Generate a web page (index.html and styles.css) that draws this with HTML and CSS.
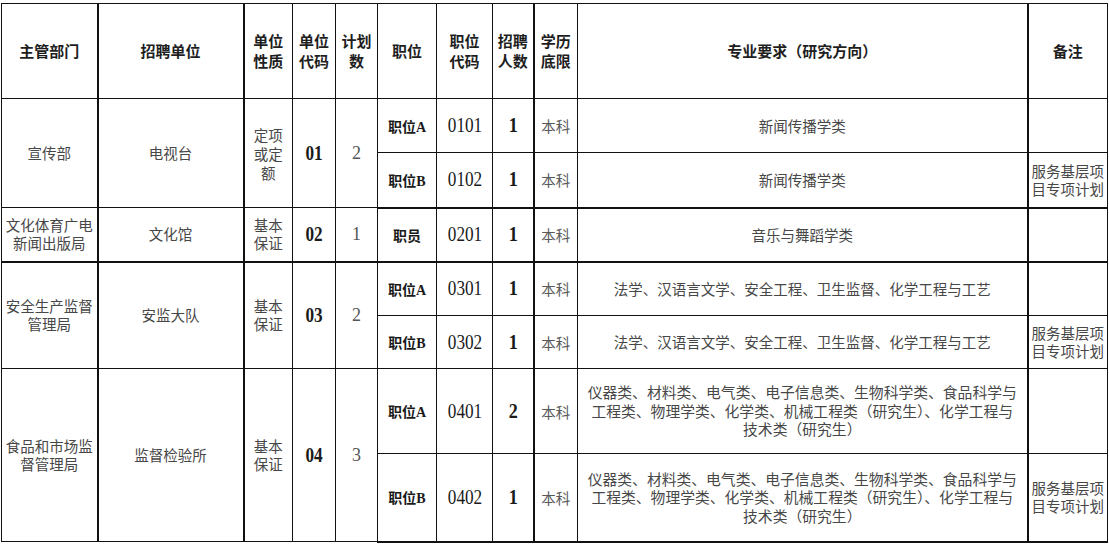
FILE: index.html
```html
<!DOCTYPE html>
<html lang="zh">
<head>
<meta charset="utf-8">
<title>招聘计划表</title>
<link rel="stylesheet" href="styles.css">
</head>
<body>
<table class="sheet">
  <colgroup>
    <col class="w-dept"><col class="w-unit"><col class="w-nature"><col class="w-ucode"><col class="w-plan">
    <col class="w-pos"><col class="w-pcode"><col class="w-num"><col class="w-edu"><col class="w-major"><col class="w-note">
  </colgroup>
  <thead>
    <tr class="r-head">
      <th class="tk-r">主管部门</th>
      <th class="tk-r">招聘单位</th>
      <th>单位<br>性质</th>
      <th>单位<br>代码</th>
      <th>计划<br>数</th>
      <th>职位</th>
      <th>职位<br>代码</th>
      <th class="tk-r">招聘<br>人数</th>
      <th>学历<br>底限</th>
      <th class="tk-r">专业要求（研究方向）</th>
      <th>备注</th>
    </tr>
  </thead>
  <tbody>
    <tr class="r-s1">
      <td rowspan="2" class="tk-r txt">宣传部</td>
      <td rowspan="2" class="tk-r txt">电视台</td>
      <td rowspan="2" class="txt nat3">定项<br>或定<br>额</td>
      <td rowspan="2" class="code"><span class="cond">01</span></td>
      <td rowspan="2" class="plan">2</td>
      <td class="pos">职位A</td>
      <td class="pcode"><span class="cond">0101</span></td>
      <td class="tk-r num"><span class="cond">1</span></td>
      <td class="edu">本科</td>
      <td class="tk-r txt">新闻传播学类</td>
      <td class="note"></td>
    </tr>
    <tr class="r-s2 tk-b">
      <td class="pos">职位B</td>
      <td class="pcode"><span class="cond">0102</span></td>
      <td class="tk-r num"><span class="cond">1</span></td>
      <td class="edu">本科</td>
      <td class="tk-r txt">新闻传播学类</td>
      <td class="note">服务基层项<br>目专项计划</td>
    </tr>
    <tr class="r-s3 tk-b">
      <td class="tk-r txt">文化体育广电<br>新闻出版局</td>
      <td class="tk-r txt">文化馆</td>
      <td class="txt">基本<br>保证</td>
      <td class="code"><span class="cond">02</span></td>
      <td class="plan">1</td>
      <td class="pos">职员</td>
      <td class="pcode"><span class="cond">0201</span></td>
      <td class="tk-r num"><span class="cond">1</span></td>
      <td class="edu">本科</td>
      <td class="tk-r txt">音乐与舞蹈学类</td>
      <td class="note"></td>
    </tr>
    <tr class="r-s4">
      <td rowspan="2" class="tk-r txt">安全生产监督<br>管理局</td>
      <td rowspan="2" class="tk-r txt">安监大队</td>
      <td rowspan="2" class="txt">基本<br>保证</td>
      <td rowspan="2" class="code"><span class="cond">03</span></td>
      <td rowspan="2" class="plan">2</td>
      <td class="pos">职位A</td>
      <td class="pcode"><span class="cond">0301</span></td>
      <td class="tk-r num"><span class="cond">1</span></td>
      <td class="edu">本科</td>
      <td class="tk-r txt">法学、汉语言文学、安全工程、卫生监督、化学工程与工艺</td>
      <td class="note"></td>
    </tr>
    <tr class="r-s5">
      <td class="pos">职位B</td>
      <td class="pcode"><span class="cond">0302</span></td>
      <td class="tk-r num"><span class="cond">1</span></td>
      <td class="edu">本科</td>
      <td class="tk-r txt">法学、汉语言文学、安全工程、卫生监督、化学工程与工艺</td>
      <td class="note">服务基层项<br>目专项计划</td>
    </tr>
    <tr class="r-s6">
      <td rowspan="2" class="tk-r txt">食品和市场监<br>督管理局</td>
      <td rowspan="2" class="tk-r txt">监督检验所</td>
      <td rowspan="2" class="txt">基本<br>保证</td>
      <td rowspan="2" class="code"><span class="cond">04</span></td>
      <td rowspan="2" class="plan">3</td>
      <td class="pos">职位A</td>
      <td class="pcode"><span class="cond">0401</span></td>
      <td class="tk-r num"><span class="cond">2</span></td>
      <td class="edu">本科</td>
      <td class="tk-r txt major">仪器类、材料类、电气类、电子信息类、生物科学类、食品科学与<br>工程类、物理学类、化学类、机械工程类（研究生）、化学工程与<br>技术类（研究生）</td>
      <td class="note"></td>
    </tr>
    <tr class="r-s7 tk-b">
      <td class="pos">职位B</td>
      <td class="pcode"><span class="cond">0402</span></td>
      <td class="tk-r num"><span class="cond">1</span></td>
      <td class="edu">本科</td>
      <td class="tk-r txt major">仪器类、材料类、电气类、电子信息类、生物科学类、食品科学与<br>工程类、物理学类、化学类、机械工程类（研究生）、化学工程与<br>技术类（研究生）</td>
      <td class="note">服务基层项<br>目专项计划</td>
    </tr>
  </tbody>
</table>
</body>
</html>
```

FILE: styles.css
```css
html, body {
  margin: 0;
  padding: 0;
  background: #ffffff;
}

body {
  padding: 3px 0 0 1px;
}

.sheet {
  border-collapse: collapse;
  table-layout: fixed;
  width: 1106px;
  font-family: "Liberation Serif", "Noto Sans CJK SC", serif;
  color: #333;
}

.w-dept { width: 96px; }
.w-unit { width: 146px; }
.w-nature { width: 49px; }
.w-ucode { width: 43px; }
.w-plan { width: 42px; }
.w-pos { width: 59px; }
.w-pcode { width: 56px; }
.w-num { width: 41px; }
.w-edu { width: 44px; }
.w-major { width: 450px; }
.w-note { width: 80px; }

.sheet th,
.sheet td {
  border: 1px solid #111;
  padding: 0;
  text-align: center;
  vertical-align: middle;
  overflow: hidden;
}

.sheet th {
  font-family: "Noto Sans CJK SC", sans-serif;
  font-weight: bold;
  font-size: 15px;
  line-height: 20px;
  color: #1e1e1e;
}

.sheet tr > .tk-r {
  border-right: 2px solid #111;
}

.sheet tr.tk-b > td {
  border-bottom: 2px solid #111;
}

.r-head { height: 95px; }
.r-s1 { height: 54px; }
.r-s2 { height: 55px; }
.r-s3 { height: 54px; }
.r-s4 { height: 54px; }
.r-s5 { height: 53px; }
.r-s6 { height: 85px; }
.r-s7 { height: 88px; }

.txt {
  font-family: "Noto Sans CJK SC", sans-serif;
  font-size: 14.5px;
  line-height: 18px;
  color: #474747;
}

.nat3 {
  line-height: 19px;
}

.major {
  font-size: 14.8px;
  line-height: 18.5px;
}

.cond {
  display: inline-block;
  transform: scaleX(0.86);
}

.code {
  font-size: 20px;
  font-weight: bold;
  color: #1a1a1a;
}

.plan {
  font-size: 18px;
  color: #555;
}

.pos {
  font-family: "Liberation Serif", "Noto Sans CJK SC", serif;
  font-weight: bold;
  font-size: 14px;
  color: #1a1a1a;
}

.pcode {
  font-size: 20px;
  color: #1a1a1a;
}

.num {
  font-size: 21px;
  font-weight: bold;
  color: #1a1a1a;
}

.edu {
  font-family: "Noto Sans CJK SC", sans-serif;
  font-size: 14.5px;
  color: #595959;
}

.note {
  font-family: "Noto Sans CJK SC", sans-serif;
  font-size: 14.5px;
  line-height: 18px;
  color: #474747;
  text-align: left;
  padding-left: 2px;
}
```
